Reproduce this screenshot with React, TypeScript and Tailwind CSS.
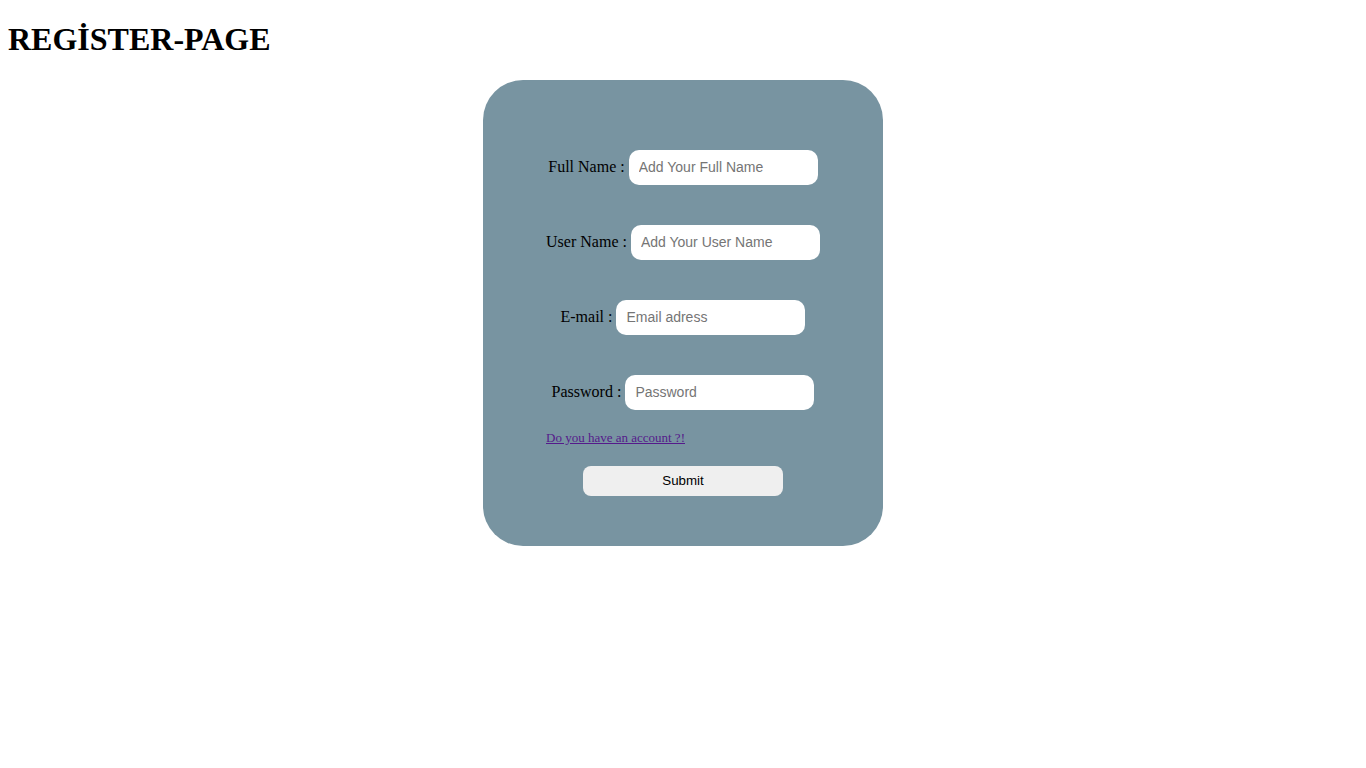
import React from "react";

const fields = [
  { label: "Full Name :", placeholder: "Add Your Full Name", type: "text" },
  { label: "User Name :", placeholder: "Add Your User Name", type: "text" },
  { label: "E-mail :", placeholder: "Email adress", type: "email" },
  { label: "Password :", placeholder: "Password", type: "password" },
];

const App = () => {
  return (
    <div className="font-['Liberation_Serif',serif] text-black">
      <h1 className="mx-2 my-[21.44px] text-[32px] font-bold leading-[37px]">REGİSTER-PAGE</h1>
      <div className="mx-auto w-[400px] rounded-[40px] bg-[#7894a1] px-[63px] pt-[70px] pb-[50px] flex flex-col items-center">
        <div className="flex flex-col items-center gap-[40px]">
          {fields.map((f) => (
            <div key={f.label} className="flex items-center gap-[4px] text-[16px]">
              <label>{f.label}</label>
              <input
                type={f.type}
                placeholder={f.placeholder}
                className="w-[189px] h-[35px] rounded-[10px] bg-white px-[10px] font-['Liberation_Sans',Arial,sans-serif] text-[14px] outline-none placeholder:text-[#757575]"
              />
            </div>
          ))}
        </div>
        <a href="#" className="self-start mt-[20px] text-[13px] leading-[15px] text-[#551a8b] underline">
          Do you have an account ?!
        </a>
        <button className="mt-[21px] w-[200px] h-[30px] rounded-[8px] bg-[#efefef] font-['Liberation_Sans',Arial,sans-serif] text-[13.33px] text-black">
          Submit
        </button>
      </div>
    </div>
  );
};

export default App;
